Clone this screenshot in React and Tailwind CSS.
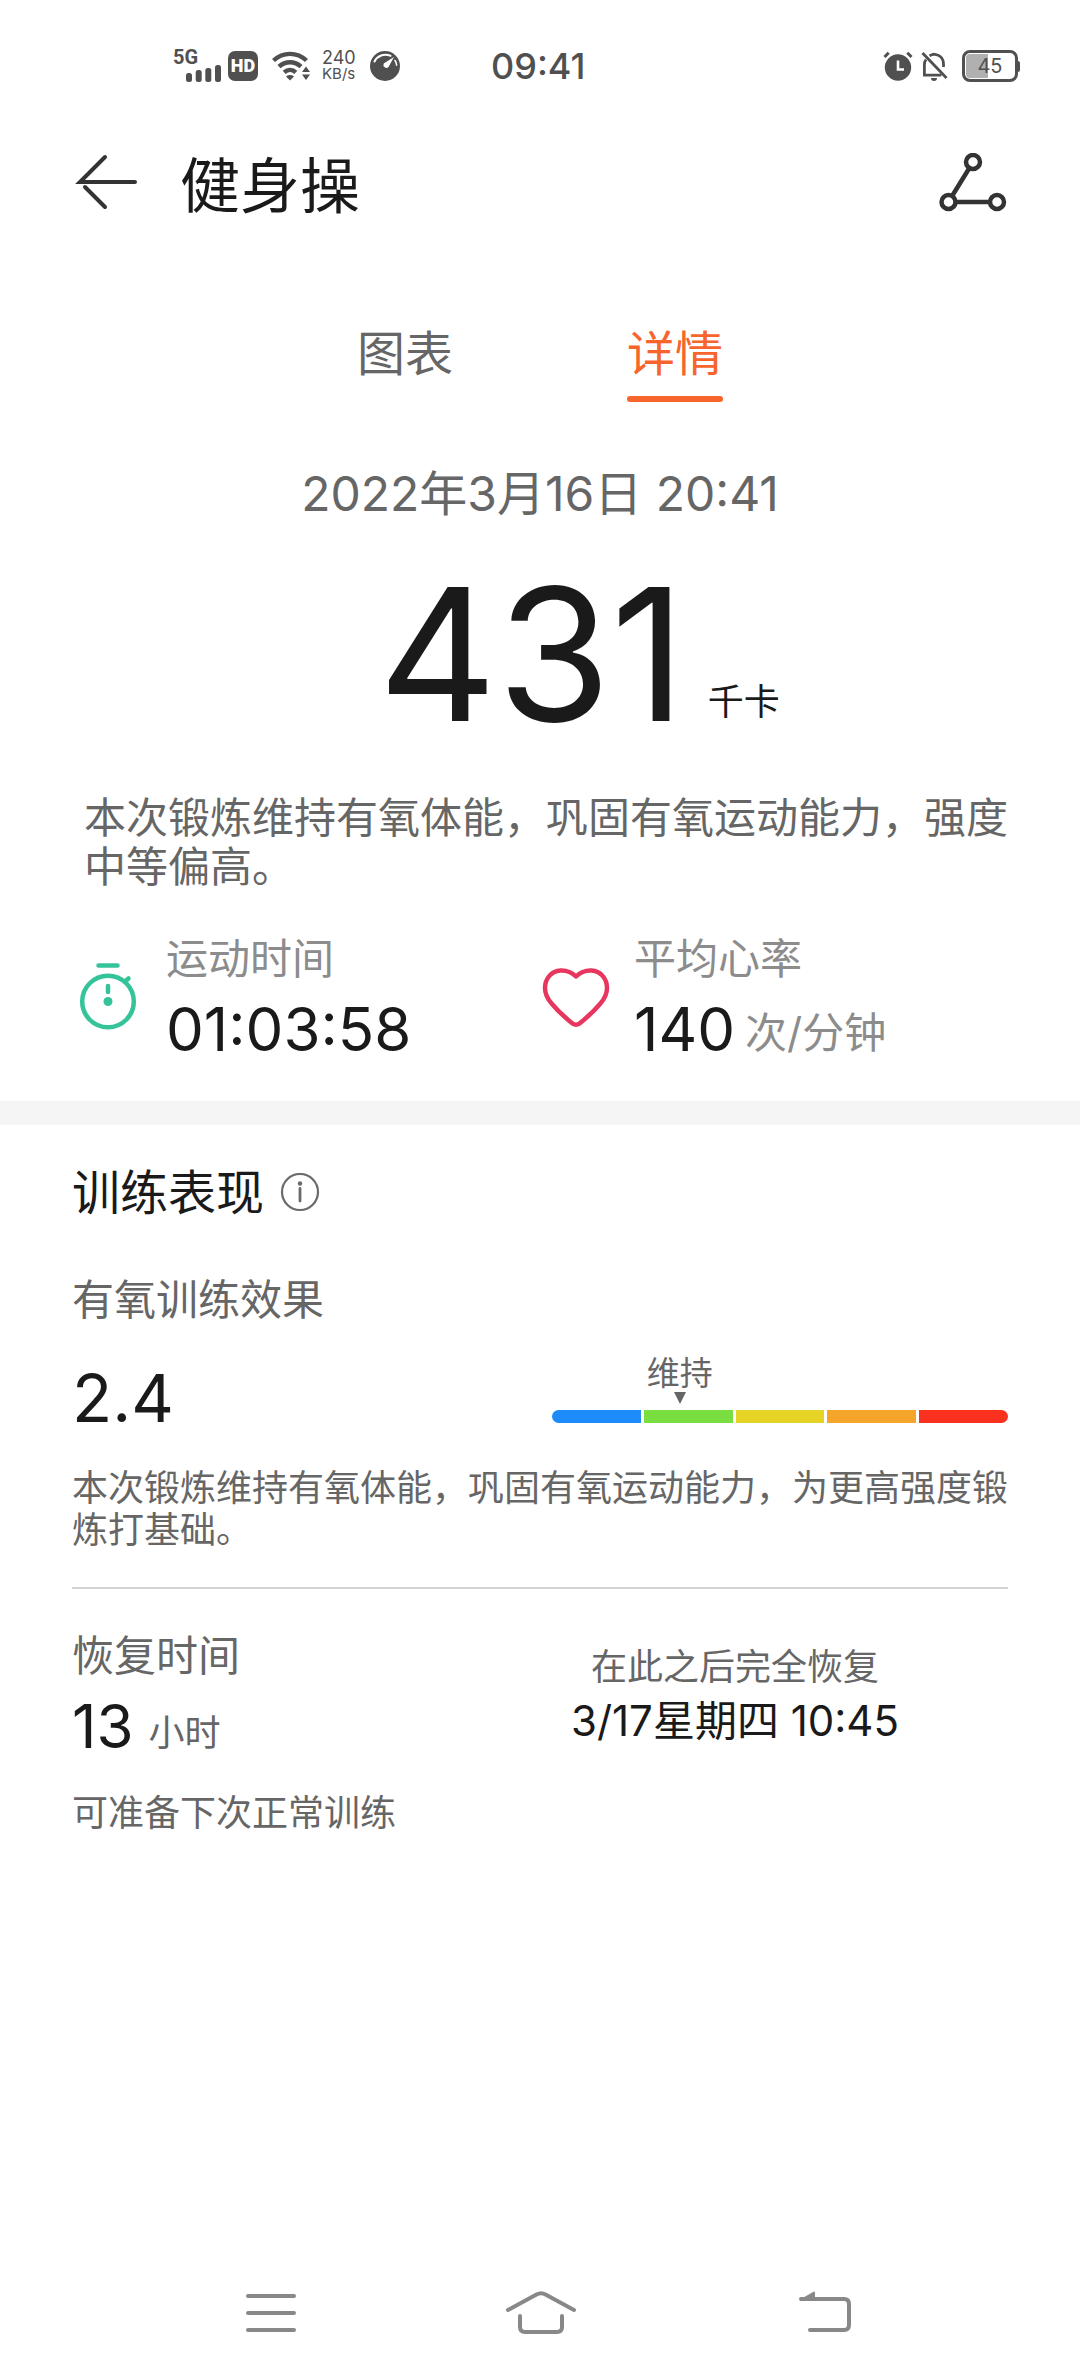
const ZONES = [
  'bg-[#1e8bfb] rounded-l-full',
  'bg-[#7ade41]',
  'bg-[#e5d325]',
  'bg-[#f5a62a]',
  'bg-[#fb311f] rounded-r-full',
];

function SignalIcon() {
  return (
    <div className="flex w-[49px] flex-col">
      <span className="font-[Roboto,sans-serif] text-[20px] leading-[15px] font-bold">5G</span>
      <svg className="h-[17px] w-[36px] self-end" viewBox="0 0 36 17" fill="currentColor" aria-hidden="true">
        <rect x="0" y="8" width="6" height="9" rx="2.5" />
        <rect x="9.7" y="5" width="6" height="12" rx="2.5" />
        <rect x="19.3" y="3" width="6" height="14" rx="2.5" />
        <rect x="29" y="0" width="6" height="17" rx="2.5" />
      </svg>
    </div>
  );
}

function WifiIcon() {
  return (
    <svg className="h-[30px] w-[38px]" viewBox="0 0 38 30" fill="none" aria-hidden="true">
      <g stroke="currentColor" strokeWidth="4.4">
        <path d="M1.5 9.5C11 .6 25 .6 34.5 9.5" />
        <path d="M7 15.7c6.3-6 15.7-6 22 0" />
        <path d="M12.2 21.4c3.4-3.2 8.2-3.2 11.6 0" />
      </g>
      <path d="M14 25.4c2.4-1.8 5.6-1.8 8 0l-4 4z" fill="currentColor" />
      <path d="M34 15.500l4 5.500h-8zM34 29l4-5.500h-8z" fill="currentColor" />
    </svg>
  );
}

function GaugeIcon() {
  return (
    <svg className="size-[30px]" viewBox="0 0 30 30" aria-hidden="true">
      <circle cx="15" cy="15" r="15" fill="currentColor" />
      <path d="M4.5 10.5C7.500 4.500 14 2.500 20.500 4.800" fill="none" stroke="#fff" strokeWidth="2" strokeLinecap="round" />
      <path d="M24 6L18.500 16a3 3 0 0 1-4.800-3.400z" fill="#fff" />
      <path d="M25 9.500c1 1.400 1.500 3 1.600 4.600" fill="none" stroke="#fff" strokeWidth="1.6" strokeLinecap="round" />
    </svg>
  );
}

function AlarmIcon() {
  return (
    <svg className="size-[30px]" viewBox="0 0 30 30" aria-hidden="true">
      <circle cx="15" cy="16.5" r="13.2" fill="currentColor" />
      <path d="M1.5 6l4.2-4.2M28.5 6l-4.2-4.2" stroke="currentColor" strokeWidth="3" />
      <path d="M15 9.5v9h6" fill="none" stroke="#fff" strokeWidth="2.6" />
    </svg>
  );
}

function BellOffIcon() {
  return (
    <svg className="h-[30px] w-[27px]" viewBox="0 0 27 30" fill="none" stroke="currentColor" strokeWidth="2.8" aria-hidden="true">
      <path d="M1.5 2l24 25" />
      <path d="M5 8.5c-1.2 1.6-1.6 3.300-1.6 5.300v10.400h17" />
      <path d="M8.5 4.800C15 1 22.500 5.500 22.500 13v3" />
      <path d="M10 3.5a3 3 0 0 1 5.500 0z" fill="currentColor" stroke="none" />
      <path d="M10 27h6a3 3 0 0 1-6 0z" fill="currentColor" stroke="none" />
    </svg>
  );
}

function StatusBar() {
  return (
    <div className="flex h-[132px] items-center pr-[60px] pl-[173px] text-[#505050]">
      <SignalIcon />
      <span className="ml-[6px] flex h-[30px] w-[30px] items-center justify-center rounded-[7px] bg-[#505050] font-[Roboto,sans-serif] text-[18px] leading-none font-black text-white">
        HD
      </span>
      <span className="ml-[14px]">
        <WifiIcon />
      </span>
      <span className="ml-[12px] flex w-[36px] flex-col text-[18px] leading-[16px] whitespace-nowrap">
        <span>240</span>
        <span className="text-[15px]">KB/s</span>
      </span>
      <span className="ml-[12px]">
        <GaugeIcon />
      </span>
      <span className="ml-[91px] text-[36px] leading-none font-medium">09:41</span>
      <span className="ml-auto flex items-center">
        <AlarmIcon />
        <span className="ml-[8px]">
          <BellOffIcon />
        </span>
        <span className="ml-[14px] flex h-[32px] w-[56px] rounded-[8px] border-[3px] border-[#505050] p-px">
          <span className="flex w-full items-center justify-center rounded-[4px] bg-linear-to-r from-[#b0b0b0] from-45% to-white to-45% text-[20px] leading-none">
            45
          </span>
        </span>
        <span className="h-[11px] w-[2px] rounded-r-full bg-[#505050]" />
      </span>
    </div>
  );
}

function Header() {
  return (
    <header className="flex h-[104px] items-center px-[72px] text-[#333333]">
      <button type="button" aria-label="返回">
        <svg className="h-[60px] w-[72px]" viewBox="0 0 72 60" fill="none" stroke="currentColor" strokeWidth="4" strokeLinecap="round" aria-hidden="true">
          <path d="M33 3L8 28h55M33 53L13 33" />
        </svg>
      </button>
      <h1 className="ml-[36px] pt-[4px] text-[60px] leading-[64px] text-[#1a1a1a]">健身操</h1>
      <button type="button" aria-label="轨迹分享" className="ml-auto">
        <svg className="h-[62px] w-[72px]" viewBox="0 0 72 62" fill="none" stroke="currentColor" strokeWidth="4.5" aria-hidden="true">
          <circle cx="37" cy="9" r="7" />
          <circle cx="12.5" cy="49" r="7" />
          <circle cx="61" cy="49" r="7" />
          <path d="M33.400 15L16.100 43M19.500 49H54" />
        </svg>
      </button>
    </header>
  );
}

function Tab({ label, active }) {
  return (
    <button
      type="button"
      role="tab"
      aria-selected={active}
      className={
        active
          ? 'flex w-1/4 flex-col items-center gap-[18px] text-[#f8652c]'
          : 'flex w-1/4 flex-col items-center gap-[18px] text-[#666666]'
      }
    >
      <span className="text-[48px] leading-[48px]">{label}</span>
      <span className={active ? 'h-[6px] w-[96px] rounded-full bg-[#f8652c]' : 'h-[6px] w-[96px]'} />
    </button>
  );
}

function Stat({ icon, label, value, unit }) {
  return (
    <div className="flex items-center">
      {icon}
      <div className="ml-[22px] flex flex-col whitespace-nowrap">
        <span className="text-[42px] leading-[56px] text-[#8c8c8c]">{label}</span>
        <span className="mt-[8px] flex items-center gap-[10px]">
          <span className="text-[60px] leading-[68px] text-[#1a1a1a]">{value}</span>
          {unit && <span className="pt-[8px] text-[42px] leading-[56px] text-[#8c8c8c]">{unit}</span>}
        </span>
      </div>
    </div>
  );
}

function StopwatchIcon() {
  return (
    <svg className="h-[72px] w-[72px]" viewBox="0 0 72 72" fill="none" stroke="#35c39a" strokeWidth="4.5" strokeLinecap="round" aria-hidden="true">
      <path d="M26.5 4.5h19M36 25v6" />
      <path d="M53 20.5l3.5-3" />
      <circle cx="36" cy="40.5" r="25.8" />
      <circle cx="36" cy="40.5" r="4.5" fill="#35c39a" stroke="none" />
    </svg>
  );
}

function HeartIcon() {
  return (
    <svg className="h-[72px] w-[72px]" viewBox="0 -1 72 72" fill="none" stroke="#e8375f" strokeWidth="4.5" strokeLinejoin="round" aria-hidden="true">
      <path d="M36 14.5C31 9.600 25.500 8.200 20.500 8.500C11.500 9 5 16.500 5 26C5 33 8 37.500 12 42C17.500 48.500 25 55.500 32.500 61.500Q36 64 39.500 61.500C47 55.500 54.500 48.500 60 42C64 37.500 67 33 67 26C67 16.500 60.500 9 51.500 8.500C46.500 8.200 41 9.600 36 14.500Z" />
    </svg>
  );
}

function EffectScale({ value, label }) {
  const left = ((value - 1) / 5) * 100;
  return (
    <div className="relative w-[456px]">
      <div className="absolute bottom-[19px] flex -translate-x-1/2 flex-col items-center" style={{ left: `${left}%` }}>
        <span className="text-[33px] leading-[38px] whitespace-nowrap text-[#666666]">{label}</span>
        <svg className="h-[12px] w-[12px]" viewBox="0 0 12 12" fill="#666666" aria-hidden="true">
          <path d="M0 0h12L6 12z" />
        </svg>
      </div>
      <div className="flex h-[13px] gap-[3px]">
        {ZONES.map((zone) => (
          <span key={zone} className={`flex-1 ${zone}`} />
        ))}
      </div>
    </div>
  );
}

function NavBar() {
  const icon = 'h-[48px] w-[84px]';
  return (
    <nav className="mt-auto grid h-[126px] grid-cols-3 items-center px-[135px] text-[#888888]">
      <button type="button" aria-label="最近任务" className="flex justify-center">
        <svg className={icon} viewBox="0 0 84 48" fill="none" stroke="currentColor" strokeWidth="4" strokeLinecap="round" aria-hidden="true">
          <path d="M20 7h46M20 24h46M20 41h46" />
        </svg>
      </button>
      <button type="button" aria-label="主屏幕" className="flex justify-center">
        <svg className={icon} viewBox="0 0 84 48" fill="none" stroke="currentColor" strokeWidth="4" strokeLinecap="round" aria-hidden="true">
          <path d="M10 21L38.500 5.500Q43 3 47.500 5.500L76 21" />
          <path d="M22 27V38Q22 43 27 43H59Q64 43 64 38V27" />
        </svg>
      </button>
      <button type="button" aria-label="后退" className="flex justify-center">
        <svg className={icon} viewBox="0 0 84 48" fill="none" stroke="currentColor" strokeWidth="4" strokeLinecap="round" aria-hidden="true">
          <path d="M33 10H76Q81 10 81 15V36Q81 41 76 41H42" />
          <path d="M46 3.500V11H33z" fill="currentColor" strokeWidth="2" strokeLinejoin="round" />
        </svg>
      </button>
    </nav>
  );
}

export default function App() {
  return (
    <div className="flex min-h-screen flex-col bg-white font-[Inter,'Noto_Sans_CJK_SC',sans-serif]" lang="zh-CN">
      <StatusBar />
      <Header />

      <main>
        <div role="tablist" className="flex justify-center pt-[94px]">
          <Tab label="图表" active={false} />
          <Tab label="详情" active />
        </div>

        <p className="pt-[64px] text-center text-[48px] leading-[56px] text-[#666666]">2022年3月16日 20:41</p>

        <div className="mt-[40px] flex items-end justify-center pl-[78px] text-[#1a1a1a]">
          <span className="text-[184px] leading-[184px]">431</span>
          <span className="ml-[22px] pb-[24px] text-[36px] leading-[40px]">千卡</span>
        </div>

        <p className="mt-[47px] pr-[72px] pl-[84px] text-[42px] leading-[49px] text-[#666666]">
          本次锻炼维持有氧体能，巩固有氧运动能力，强度中等偏高。
        </p>

        <div className="mt-[40px] grid grid-cols-2 px-[72px]">
          <Stat icon={<StopwatchIcon />} label="运动时间" value="01:03:58" />
          <Stat icon={<HeartIcon />} label="平均心率" value="140" unit="次/分钟" />
        </div>

        <div className="mt-[38px] h-[24px] bg-[#f5f5f5]" />

        <section className="px-[72px] pt-[40px]">
          <div className="flex items-center gap-[16px]">
            <h2 className="text-[48px] leading-[56px] text-[#1a1a1a]">训练表现</h2>
            <button type="button" aria-label="说明">
              <svg className="size-[40px]" viewBox="0 0 40 40" fill="none" stroke="#6a6a6a" strokeWidth="2.2" aria-hidden="true">
                <circle cx="20" cy="19" r="18" />
                <path d="M20 15.500V28" strokeWidth="2.800" strokeLinecap="round" />
                <circle cx="20" cy="10.500" r="2.200" fill="#6a6a6a" stroke="none" />
              </svg>
            </button>
          </div>

          <h3 className="mt-[51px] text-[42px] leading-[56px] text-[#666666]">有氧训练效果</h3>

          <div className="mt-[32px] flex items-end justify-between">
            <span className="text-[66px] leading-[76px] text-[#1a1a1a]">2.4</span>
            <div className="pb-[13px]">
              <EffectScale value={2.4} label="维持" />
            </div>
          </div>

          <p className="mt-[31px] text-[36px] leading-[42px] text-[#666666]">
            本次锻炼维持有氧体能，巩固有氧运动能力，为更高强度锻炼打基础。
          </p>

          <hr className="mt-[36px] border-t-2 border-[#d4d4d4]" />

          <div className="mt-[39px] grid grid-cols-2">
            <div className="flex flex-col">
              <h3 className="text-[42px] leading-[56px] text-[#666666]">恢复时间</h3>
              <span className="mt-[8px] flex items-center gap-[15px]">
                <span className="text-[60px] leading-[68px] text-[#1a1a1a]">13</span>
                <span className="pt-[14px] text-[36px] leading-[40px] text-[#666666]">小时</span>
              </span>
            </div>
            <div className="flex flex-col items-center gap-[2px] pt-[15px] pr-[78px] whitespace-nowrap">
              <span className="text-[36px] leading-[48px] text-[#666666]">在此之后完全恢复</span>
              <span className="text-[42px] leading-[56px] text-[#1a1a1a]">3/17星期四 10:45</span>
            </div>
          </div>

          <p className="mt-[29px] text-[36px] leading-[48px] text-[#666666]">可准备下次正常训练</p>
        </section>
      </main>

      <NavBar />
    </div>
  );
}
